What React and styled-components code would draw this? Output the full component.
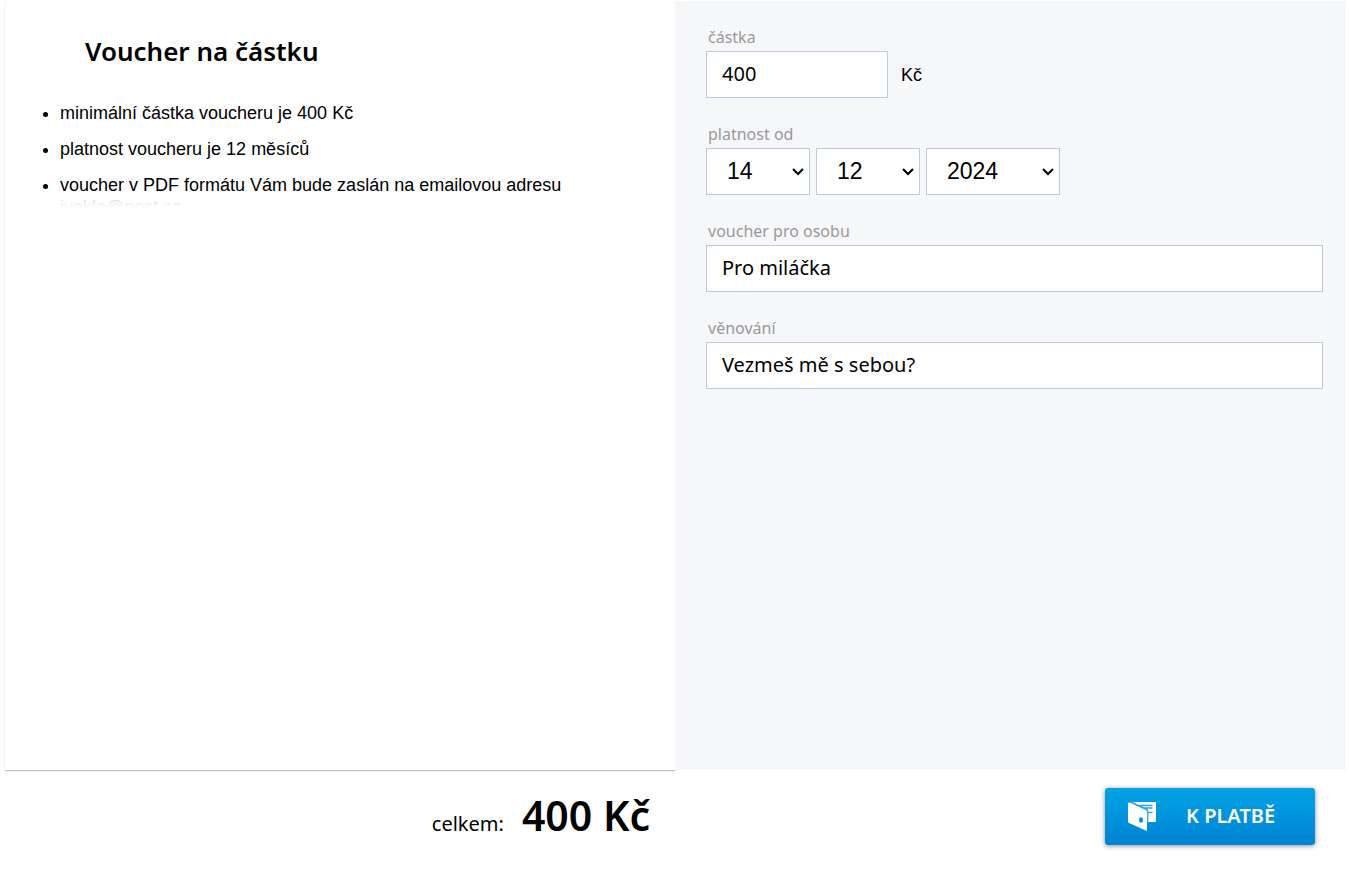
import React from "react";
import styled, { createGlobalStyle } from "styled-components";

const humanist = `"Noto Sans", "Open Sans", sans-serif`;
const grotesque = `"Liberation Sans", Arial, sans-serif`;

const GlobalStyle = createGlobalStyle`
  *, *::before, *::after { box-sizing: border-box; }
  body { margin: 0; background: #fff; color: #000; font: 18px/22px ${grotesque}; }
`;

const Page = styled.form`
  display: flex;
  flex-direction: column;
  min-height: 100vh;
  padding: 1px 3px 0 4px;
`;

const Panels = styled.main`
  flex: 1;
  display: grid;
  grid-template-columns: 1fr 1fr;
`;

const Info = styled.section`
  padding: 32px 40px;
  margin-left: 1px;
  box-shadow: 0 1px 1px rgba(0, 0, 0, 0.25);
`;

const Title = styled.h1`
  margin: 0 0 33px 40px;
  font: 600 26px/36px ${humanist};
`;

const Details = styled.div`
  position: relative;
  height: 110px;
  margin-left: -20px;
  overflow: hidden;

  &::after {
    content: "";
    position: absolute;
    inset: auto 0 0 0;
    height: 16px;
    background: linear-gradient(rgba(255, 255, 255, 0.8), #fff 75%);
  }
`;

const Rules = styled.ul`
  display: grid;
  gap: 14px;
  margin: 0;
  padding: 0 60px 0 35px;
`;

const Form = styled.section`
  display: flex;
  flex-direction: column;
  gap: 24px;
  padding: 24px 23px 24px 31px;
  background: #f6f7f9;
`;

const Field = styled.div`
  display: flex;
  flex-direction: column;
`;

const Label = styled.label`
  padding: 0 2px 2px;
  color: #999;
  font: 16px/24px ${humanist};
`;

const Row = styled.div`
  display: flex;
  align-items: center;
  gap: ${(p) => p.$gap}px;
`;

const TextBox = styled.input`
  width: ${(p) => p.$width || "100%"};
  height: 47px;
  padding: 0 15px 2px;
  border: 1px solid #bec8de;
  border-radius: 0;
  background: #fff;
  color: #000;
  font: 20px/28px ${humanist};
`;

const SelectBox = styled.div`
  position: relative;
  width: ${(p) => p.$width}px;

  svg {
    position: absolute;
    top: 19px;
    right: 5px;
    pointer-events: none;
  }
`;

const Select = styled.select`
  appearance: none;
  width: 100%;
  height: 47px;
  padding: 0 20px 2px;
  border: 1px solid #bec8de;
  border-radius: 0;
  background: #fff;
  color: #000;
  font: 23px/28px ${grotesque};
`;

const Footer = styled.footer`
  display: grid;
  grid-template-columns: 1fr 1fr;
  height: 109px;
`;

const Total = styled.p`
  display: flex;
  justify-content: flex-end;
  align-items: baseline;
  gap: 18px;
  margin: 0;
  padding: 17px 25px;
  font: 20px/56px ${humanist};
`;

const Amount = styled.strong`
  font-size: 41px;
  font-weight: 600;
`;

const Actions = styled.div`
  display: flex;
  justify-content: flex-end;
  align-items: flex-start;
  padding: 18px 31px;
`;

const PayButton = styled.button`
  display: flex;
  align-items: center;
  gap: 29px;
  width: 210px;
  height: 57px;
  padding: 0 22px 2px;
  border: 0;
  border-radius: 3px;
  background: linear-gradient(#00a3e3, #0083d6);
  box-shadow: 0 1px 5px rgba(0, 0, 0, 0.45);
  color: #fff;
  font: 600 20px/28px ${humanist};
  white-space: nowrap;
  cursor: pointer;
`;

const WalletIcon = () => (
  <svg width="30" height="30" viewBox="0 0 30 30" aria-hidden="true">
    <path d="M3 1H28Q29 1 29 2V20Q29 21 28 21H21V8Z" fill="#fff" />
    <path d="M12 4.500H25.500M18 7H25.500M20 11.500H25.500" stroke="#2ba8e2" strokeWidth="1.300" fill="none" />
    <path d="M1 2.500Q1 1 2.500 1.600L19 9Q20 9.500 20 11V30L2 22Q1 21.500 1 20.500Z" fill="#fff" />
    <path d="M4 1.200L19 7.600Q20.700 8.500 20.700 10.500V22" stroke="#35ace4" strokeWidth="1.400" fill="none" />
    <ellipse cx="14" cy="19" rx="2" ry="2.800" fill="#0790da" />
  </svg>
);

const Chevron = () => (
  <svg width="14" height="10" viewBox="0 0 14 10" aria-hidden="true">
    <path d="M2 2L7 7L12 2" fill="none" stroke="#000" strokeWidth="2" />
  </svg>
);

const SelectField = ({ label, value, width }) => (
  <SelectBox $width={width}>
    <Select aria-label={label} defaultValue={value}>
      <option>{value}</option>
    </Select>
    <Chevron />
  </SelectBox>
);

export default function App() {
  return (
    <>
      <GlobalStyle />
      <Page onSubmit={(e) => e.preventDefault()}>
        <Panels>
          <Info>
            <Title>Voucher na částku</Title>
            <Details>
              <Rules>
                <li>minimální částka voucheru je 400 Kč</li>
                <li>platnost voucheru je 12 měsíců</li>
                <li>voucher v PDF formátu Vám bude zaslán na emailovou adresu ivekla@post.cz</li>
              </Rules>
            </Details>
          </Info>
          <Form>
            <Field>
              <Label htmlFor="amount">částka</Label>
              <Row $gap={13}>
                <TextBox id="amount" defaultValue="400" $width="182px" />
                <span>Kč</span>
              </Row>
            </Field>
            <Field>
              <Label as="span">platnost od</Label>
              <Row $gap={6} role="group" aria-label="platnost od">
                <SelectField label="den" value="14" width={104} />
                <SelectField label="měsíc" value="12" width={104} />
                <SelectField label="rok" value="2024" width={134} />
              </Row>
            </Field>
            <Field>
              <Label htmlFor="person">voucher pro osobu</Label>
              <TextBox id="person" defaultValue="Pro miláčka" />
            </Field>
            <Field>
              <Label htmlFor="dedication">věnování</Label>
              <TextBox id="dedication" defaultValue="Vezmeš mě s sebou?" />
            </Field>
          </Form>
        </Panels>
        <Footer>
          <Total>
            celkem: <Amount>400 Kč</Amount>
          </Total>
          <Actions>
            <PayButton type="submit">
              <WalletIcon />
              K PLATBĚ
            </PayButton>
          </Actions>
        </Footer>
      </Page>
    </>
  );
}
